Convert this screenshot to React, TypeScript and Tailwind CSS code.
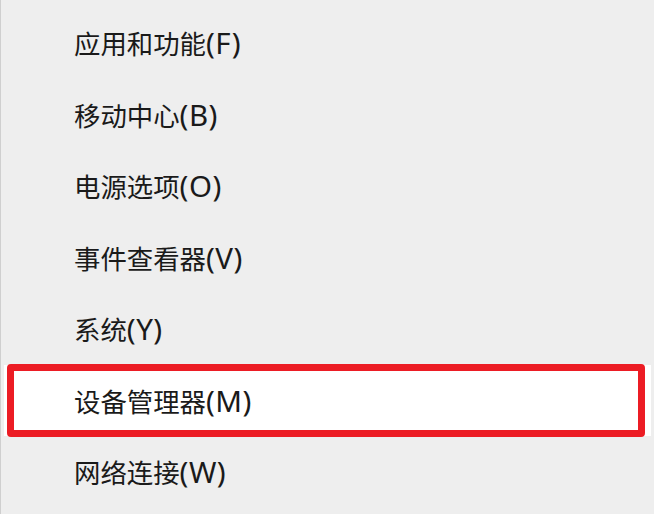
import React from "react";

const items: [string, string][] = [
  ["应用和功能", "(F)"],
  ["移动中心", "(B)"],
  ["电源选项", "(O)"],
  ["事件查看器", "(V)"],
  ["系统", "(Y)"],
  ["设备管理器", "(M)"],
  ["网络连接", "(W)"],
];

export default function App() {
  return (
    <div
      className="w-[654px] h-[514px] overflow-hidden bg-[#eeeeee] border-l border-[#cfcfcf] pt-[7px] px-[3px]"
      style={{ fontFamily: '"Noto Sans", "Noto Sans CJK SC", sans-serif' }}
    >
      {items.map(([cjk, key], i) => {
        const active = i === 5;
        return (
          <div
            key={cjk}
            className={
              active
                ? "relative h-[71.5px] flex items-center pl-[70px] bg-white text-[#1a1a1a]"
                : "relative h-[71.5px] flex items-center pl-[70px] text-[#1a1a1a]"
            }
          >
            <span className="leading-none flex items-baseline">
              <span className="text-[26.4px]">{cjk}</span>
              <span className="text-[29.5px] tracking-[0.5px]">{key}</span>
            </span>
            {active && (
              <div className="absolute left-[3px] right-[6px] top-[-1px] bottom-[-1px] border-[7px] border-[#ec1c24] rounded-[4px]" />
            )}
          </div>
        );
      })}
    </div>
  );
}
